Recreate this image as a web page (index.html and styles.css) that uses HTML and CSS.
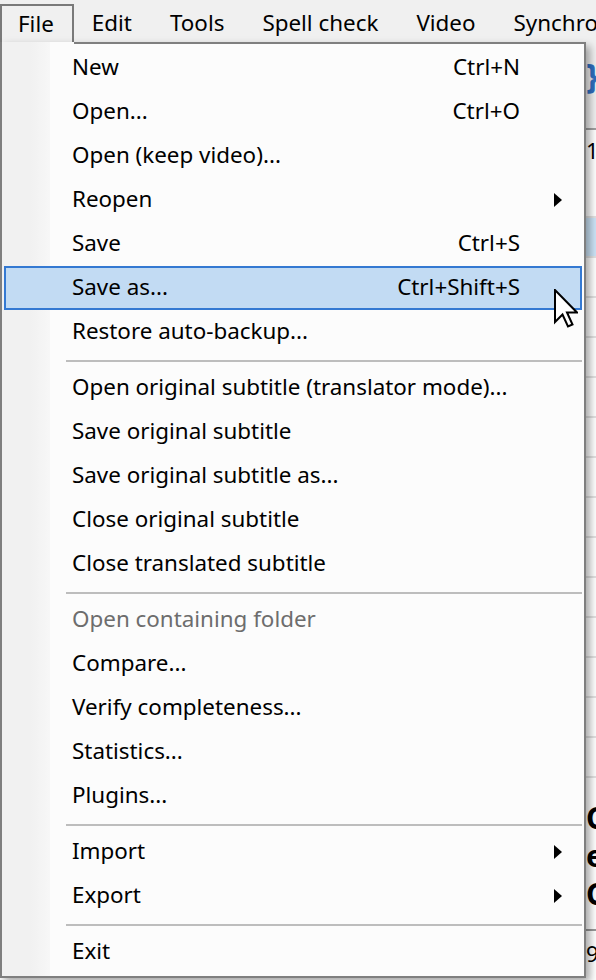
FILE: index.html
```html
<!DOCTYPE html>
<html>
<head>
<meta charset="utf-8">
<link rel="stylesheet" href="styles.css">
</head>
<body>
<div class="window">
  <div class="menubar">
    <div class="mb-item mb-open">File</div>
    <div class="mb-item">Edit</div>
    <div class="mb-item">Tools</div>
    <div class="mb-item">Spell check</div>
    <div class="mb-item">Video</div>
    <div class="mb-item">Synchro</div>
  </div>
  <div class="app">
    <div class="app-spacer"></div>
    <div class="app-col">
      <div class="tb"><span class="tb-icon">}</span></div>
      <div class="hdr"><span class="hdr-glyph">1</span></div>
      <div class="row"></div>
      <div class="row row-sel"></div>
      <div class="row"></div>
      <div class="row"></div>
      <div class="row"></div>
      <div class="row"></div>
      <div class="row"></div>
      <div class="row"></div>
      <div class="row"></div>
      <div class="row"></div>
      <div class="row"></div>
      <div class="row"></div>
      <div class="row"></div>
      <div class="row"></div>
      <div class="row"></div>
      <div class="preview">
        <span class="pv-big">C</span>
        <span class="pv-big">e</span>
        <span class="pv-big">C</span>
        <span class="pv-line"></span>
        <span class="pv-small">9</span>
      </div>
    </div>
  </div>

  <div class="dropdown">
    <div class="gutter"></div>
    <div class="mi"><span class="lbl">New</span><span class="sc">Ctrl+N</span><span class="ar"></span></div>
    <div class="mi"><span class="lbl">Open...</span><span class="sc">Ctrl+O</span><span class="ar"></span></div>
    <div class="mi"><span class="lbl">Open (keep video)...</span><span class="sc"></span><span class="ar"></span></div>
    <div class="mi"><span class="lbl">Reopen</span><span class="sc"></span><span class="ar"><span class="tri"></span></span></div>
    <div class="mi"><span class="lbl">Save</span><span class="sc">Ctrl+S</span><span class="ar"></span></div>
    <div class="mi mi-hot"><span class="lbl">Save as...</span><span class="sc">Ctrl+Shift+S</span><span class="ar"></span></div>
    <div class="mi"><span class="lbl">Restore auto-backup...</span><span class="sc"></span><span class="ar"></span></div>
    <div class="sep"></div>
    <div class="mi"><span class="lbl">Open original subtitle (translator mode)...</span><span class="sc"></span><span class="ar"></span></div>
    <div class="mi"><span class="lbl">Save original subtitle</span><span class="sc"></span><span class="ar"></span></div>
    <div class="mi"><span class="lbl">Save original subtitle as...</span><span class="sc"></span><span class="ar"></span></div>
    <div class="mi"><span class="lbl">Close original subtitle</span><span class="sc"></span><span class="ar"></span></div>
    <div class="mi"><span class="lbl">Close translated subtitle</span><span class="sc"></span><span class="ar"></span></div>
    <div class="sep"></div>
    <div class="mi mi-dis"><span class="lbl">Open containing folder</span><span class="sc"></span><span class="ar"></span></div>
    <div class="mi"><span class="lbl">Compare...</span><span class="sc"></span><span class="ar"></span></div>
    <div class="mi"><span class="lbl">Verify completeness...</span><span class="sc"></span><span class="ar"></span></div>
    <div class="mi"><span class="lbl">Statistics...</span><span class="sc"></span><span class="ar"></span></div>
    <div class="mi"><span class="lbl">Plugins...</span><span class="sc"></span><span class="ar"></span></div>
    <div class="sep"></div>
    <div class="mi"><span class="lbl">Import</span><span class="sc"></span><span class="ar"><span class="tri"></span></span></div>
    <div class="mi"><span class="lbl">Export</span><span class="sc"></span><span class="ar"><span class="tri"></span></span></div>
    <div class="sep"></div>
    <div class="mi"><span class="lbl">Exit</span><span class="sc"></span><span class="ar"></span></div>
  </div>

  <svg class="cursor" width="24" height="40" viewBox="0 0 24 40">
    <path d="M1 1 L1 33 L8.5 25.5 L14 37.5 L18.5 35.5 L13 23.5 L23 23.5 Z" fill="#fff" stroke="#000" stroke-width="2" stroke-linejoin="miter"/>
  </svg>
</div>
</body>
</html>
```

FILE: styles.css
```css
* { box-sizing: border-box; }
html, body { margin: 0; padding: 0; }
body {
  width: 596px;
  height: 980px;
  overflow: hidden;
  background: #ffffff;
  font-family: "Noto Sans", "Open Sans", sans-serif;
  font-size: 22.4px;
  color: #000;
}
.window {
  position: relative;
  width: 596px;
  height: 980px;
  overflow: hidden;
}
.menubar {
  display: flex;
  height: 44px;
  padding-top: 4px;
  background: #f0f0f0;
  white-space: nowrap;
  overflow: hidden;
}
.mb-item {
  flex: none;
  padding: 0 20px 0 18px;
  height: 40px;
  line-height: 38px;
}
.mb-open {
  border: 2px solid #7a7a7a;
  border-bottom: none;
  padding: 0 18px 0 16px;
  line-height: 36px;
  background: #f0f0f0;
}

/* app content beneath the menu */
.app {
  display: flex;
  height: 936px;
  background: #fff;
}
.app-spacer { width: 584px; flex: none; }
.app-col { flex: 1; display: flex; flex-direction: column; overflow: hidden; }
.tb {
  height: 84px;
  flex: none;
  background: #f0f0f0;
  padding-top: 14px;
}
.tb-icon {
  color: #2f6fc0;
  font-size: 34px;
  font-weight: bold;
  line-height: 1;
  padding-left: 2px;
}
.hdr {
  height: 50px;
  flex: none;
  border-top: 2px solid #a0a0a0;
  background: #fff;
  padding-left: 2px;
  font-size: 22px;
  line-height: 40px;
}
.hdr-glyph { color: #000; }
.row {
  height: 40px;
  flex: none;
  border-bottom: 2px solid #e2e2e2;
}
.row-sel { background: #cce4f7; }
.preview {
  flex: 1;
  display: flex;
  flex-direction: column;
  padding-left: 2px;
  padding-top: 21px;
  font-weight: bold;
  font-size: 30px;
  line-height: 38px;
}
.pv-big { color: #000; }
.pv-line { height: 2px; background: #999; margin: 16px 0 7px; flex: none; }
.pv-small { font-size: 22px; font-weight: normal; line-height: 30px; }

/* dropdown menu */
.dropdown {
  position: absolute;
  left: 0;
  top: 42px;
  width: 586px;
  height: 936px;
  background: #fcfcfc;
  border: 2px solid #7f7f7f;
  border-top: none;
  padding: 4px 0 2px;
  box-shadow: 4px 4px 8px rgba(0,0,0,0.35);
  display: flex;
  flex-direction: column;
}
.dropdown::before {
  content: "";
  position: absolute;
  top: 0;
  left: 72px;
  right: 0;
  height: 2px;
  background: #7f7f7f;
}
.gutter {
  position: absolute;
  left: 0;
  top: 0;
  bottom: 0;
  width: 48px;
  background: linear-gradient(to right, #f1f1f1, #f1f1f1 60%, #f7f7f7);
}
.mi {
  position: relative;
  height: 44px;
  flex: none;
  margin: 0 2px;
  border: 2px solid transparent;
  display: grid;
  grid-template-columns: 1fr auto 60px;
  align-items: center;
  padding-left: 66px;
  white-space: nowrap;
  line-height: 1;
}
.mi-hot {
  background: #c2dbf3;
  border-color: #3479d2;
}
.mi-dis { color: #6d6d6d; }
.lbl { margin-top: -1px; }
.sc { text-align: right; margin-top: -1px; }
.ar {
  display: flex;
  justify-content: flex-end;
  padding-right: 18px;
}
.tri {
  width: 0;
  height: 0;
  border-top: 7px solid transparent;
  border-bottom: 7px solid transparent;
  border-left: 8px solid #000;
}
.sep {
  position: relative;
  height: 12px;
  flex: none;
}
.sep::after {
  content: "";
  position: absolute;
  left: 64px;
  right: 2px;
  top: 6px;
  height: 2px;
  background: #bdbdbd;
}
.cursor {
  position: absolute;
  left: 554px;
  top: 289px;
}
```
